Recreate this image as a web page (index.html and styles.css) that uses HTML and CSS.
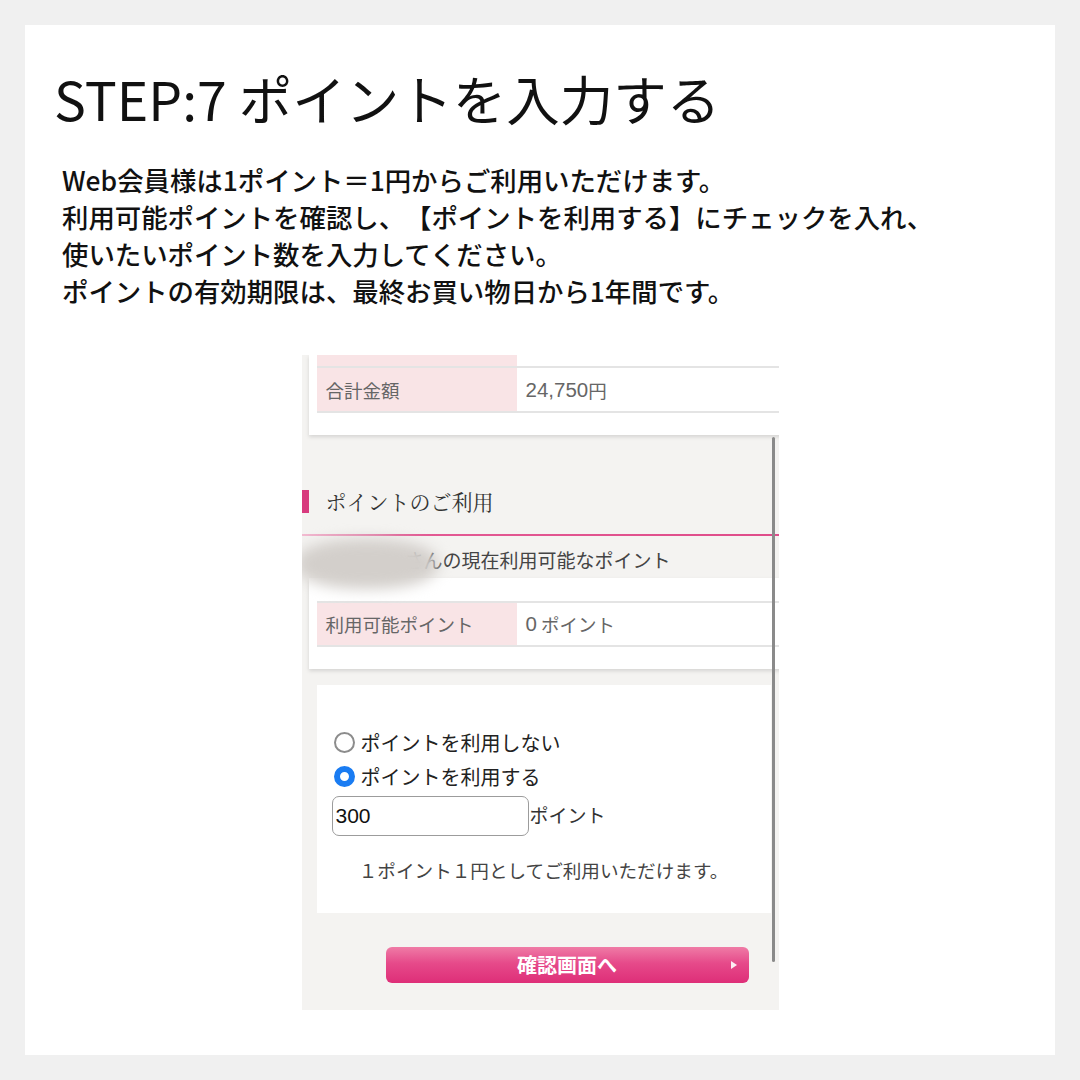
FILE: index.html
```html
<!DOCTYPE html>
<html lang="ja">
<head>
<meta charset="utf-8">
<title>STEP:7 ポイントを入力する</title>
<link rel="stylesheet" href="styles.css">
</head>
<body>
<div class="page">
  <div class="card">
    <h1 class="title">STEP:7 ポイントを入力する</h1>
    <p class="lead">Web会員様は1ポイント＝1円からご利用いただけます。<br>利用可能ポイントを確認し、【ポイントを利用する】にチェックを入れ、<br>使いたいポイント数を入力してください。<br>ポイントの有効期限は、最終お買い物日から1年間です。</p>

    <div class="shot">
      <div class="panel panel-top">
        <div class="trow trow-cut"><div class="tlabel"></div><div class="tval"></div></div>
        <div class="trow"><div class="tlabel">合計金額</div><div class="tval"><span class="num">24,750</span>円</div></div>
      </div>

      <div class="sec-head"><h2 class="sec-title">ポイントのご利用</h2></div>
      <div class="pink-rule"></div>
      <div class="name-row">さんの現在利用可能なポイント</div>

      <div class="panel panel-points">
        <div class="trow trow-top"><div class="tlabel">利用可能ポイント</div><div class="tval"><span class="num">0</span>&nbsp;ポイント</div></div>
      </div>

      <div class="point-box">
        <div class="opt"><span class="radio"></span>ポイントを利用しない</div>
        <div class="opt"><span class="radio radio-on"></span>ポイントを利用する</div>
        <div class="input-row"><input class="pt-input" type="text" value="300"><span class="pt-unit">ポイント</span></div>
        <p class="note">１ポイント１円としてご利用いただけます。</p>
      </div>

      <div class="btn-area">
        <button class="btn" type="button">確認画面へ<span class="btn-arrow"></span></button>
      </div>

      <div class="name-blur"></div>
      <div class="scrollbar"></div>
    </div>
  </div>
</div>
</body>
</html>
```

FILE: styles.css
```css
* { box-sizing: border-box; }

html, body {
  margin: 0;
  padding: 0;
}

body {
  background: #f0f0f0;
  font-family: "Noto Sans CJK JP", "Noto Sans", sans-serif;
  color: #111;
}

.page {
  width: 1080px;
  height: 1080px;
  padding: 25px;
}

.card {
  width: 1030px;
  height: 1030px;
  background: #fff;
  display: flex;
  flex-direction: column;
}

.title {
  margin: 42px 0 0 29px;
  font-size: 53.5px;
  line-height: 62px;
  font-weight: 400;
  color: #111;
  white-space: nowrap;
}

.lead {
  margin: 32px 0 0 37px;
  font-size: 26.4px;
  line-height: 37px;
  font-weight: 500;
  color: #111;
  white-space: nowrap;
  text-spacing-trim: space-all;
}

/* embedded screenshot */
.shot {
  position: relative;
  align-self: center;
  margin-top: 46px;
  width: 477px;
  height: 655px;
  overflow: hidden;
  background: #f4f3f1;
  font-family: "Liberation Sans", "Noto Sans CJK JP", sans-serif;
}

.panel {
  margin-left: 7px;
  margin-right: -30px;
  background: #fff;
  padding: 0 0 22px 8px;
  box-shadow: 0 2px 4px rgba(0, 0, 0, 0.13);
  position: relative;
  z-index: 1;
}

.panel-points {
  padding-top: 23px;
}

.trow {
  display: flex;
  height: 45px;
  border-bottom: 2px solid #e4e4e4;
  font-family: "Noto Sans CJK JP", sans-serif;
  font-size: 18.5px;
  color: #666;
}

.trow-cut {
  height: 13px;
}

.trow-top {
  height: 46px;
  border-top: 2px solid #e4e4e4;
}

.tlabel {
  width: 200px;
  background: #f9e4e6;
  padding-left: 9px;
  display: flex;
  align-items: center;
}

.tval {
  flex: 1;
  padding-left: 9px;
  display: flex;
  align-items: center;
}

.num {
  font-family: "Liberation Sans", sans-serif;
  font-size: 20.5px;
}

.sec-head {
  padding: 55px 0 21px 0;
}

.sec-title {
  margin: 0;
  height: 23px;
  border-left: 7px solid #d83a7e;
  padding-left: 17px;
  font-family: "Noto Serif CJK JP", "Noto Sans CJK JP", serif;
  font-weight: 400;
  font-size: 21px;
  line-height: 23px;
  color: #333;
}

.pink-rule {
  height: 2px;
  background: linear-gradient(to right, #f2bcd2 0%, #e35a94 20%, #df4c8a 100%);
}

.name-row {
  height: 42px;
  padding-top: 6px;
  line-height: 36px;
  padding-left: 103px;
  font-family: "Noto Sans CJK JP", sans-serif;
  font-size: 19px;
  color: #444;
  white-space: nowrap;
}

.name-blur {
  position: absolute;
  left: -6px;
  top: 184px;
  width: 142px;
  height: 50px;
  border-radius: 45%;
  background: #d3cfcb;
  filter: blur(7px);
  z-index: 3;
}

.point-box {
  margin: 16px 8px 0 15px;
  height: 228px;
  background: #fff;
  padding-top: 40px;
}

.opt {
  display: flex;
  align-items: center;
  height: 34px;
  padding-left: 17px;
  font-family: "Noto Sans CJK JP", sans-serif;
  font-size: 20px;
  color: #222;
}

.radio {
  width: 21px;
  height: 21px;
  border-radius: 50%;
  border: 2px solid #8c8c8c;
  background: #fff;
  margin-right: 6px;
  flex: none;
}

.radio-on {
  border: 6px solid #1a7cf2;
}

.input-row {
  display: flex;
  align-items: center;
  margin-top: 3px;
  padding-left: 15px;
}

.pt-input {
  width: 197px;
  height: 40px;
  border: 1.5px solid #9c9c9c;
  border-radius: 7px;
  padding: 0 3px;
  margin: 0;
  font-family: "Liberation Sans", sans-serif;
  font-size: 21px;
  color: #111;
  background: #fff;
}

.pt-unit {
  margin-left: 1px;
  font-family: "Noto Sans CJK JP", sans-serif;
  font-size: 19px;
  color: #333;
  align-self: flex-start;
  line-height: 38px;
}

.note {
  margin: 21px 0 0 0;
  text-align: center;
  font-family: "Noto Sans CJK JP", sans-serif;
  font-size: 18.6px;
  line-height: 26px;
  color: #444;
}

.btn-area {
  height: 97px;
  padding: 34px 0 0 84px;
}

.btn {
  position: relative;
  display: block;
  width: 363px;
  height: 36px;
  border: none;
  border-radius: 6px;
  padding: 0;
  background: linear-gradient(to bottom, #ef7ba6 0%, #e64a8a 45%, #de2e78 100%);
  color: #fff;
  font-family: "Noto Sans CJK JP", sans-serif;
  font-size: 20px;
  font-weight: 700;
  line-height: 36px;
  text-align: center;
}

.btn-arrow {
  position: absolute;
  right: 12px;
  top: 14px;
  width: 0;
  height: 0;
  border-left: 6px solid rgba(255, 255, 255, 0.9);
  border-top: 4px solid transparent;
  border-bottom: 4px solid transparent;
}

.scrollbar {
  position: absolute;
  left: 470px;
  top: 82px;
  width: 3px;
  height: 525px;
  border-radius: 2px;
  background: #8a8a8a;
  z-index: 4;
}
```
